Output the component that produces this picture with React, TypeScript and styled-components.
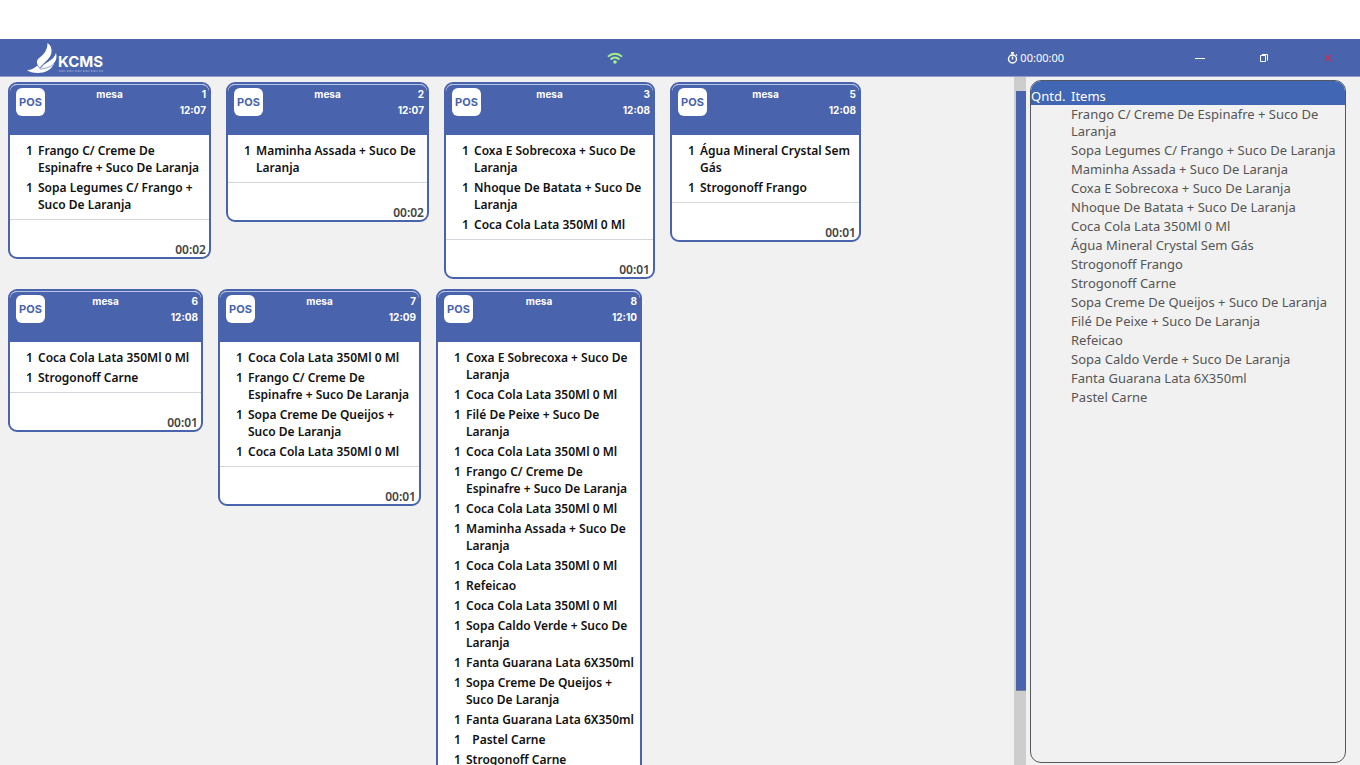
import React from "react";
import styled, { createGlobalStyle } from "styled-components";

const blue = "#4a63ad";

const GlobalStyle = createGlobalStyle`
  * { box-sizing: border-box; }
  html, body, #root { height: 100%; }
  body {
    margin: 0;
    overflow: hidden;
    background: #f1f1f1;
    font-family: "Noto Sans", "Open Sans", sans-serif;
    color: #111;
  }
`;

const Screen = styled.div`
  display: flex;
  flex-direction: column;
  height: 100vh;
  padding-top: 39px;
  background: #fff;
`;

const TitleBar = styled.header`
  display: grid;
  grid-template-columns: 1fr auto 1fr;
  align-items: center;
  flex: none;
  height: 38px;
  background: ${blue};
  border-bottom: 1px solid #8c9ccb;
  color: #fff;
`;

const Brand = styled.div`
  padding-left: 26px;
  svg { display: block; }
`;

const Signal = styled.div`
  padding-right: 130px;
  svg { display: block; }
`;

const BarEnd = styled.div`
  display: flex;
  align-items: center;
  justify-content: flex-end;
`;

const Clock = styled.div`
  display: flex;
  align-items: center;
  gap: 2px;
  margin-right: 104px;
  font: 11px/16px "Noto Sans", sans-serif;
`;

const WindowButton = styled.button`
  display: flex;
  align-items: center;
  justify-content: center;
  width: 64px;
  height: 36px;
  padding: 0;
  border: 0;
  background: none;
  color: ${(p) => p.color || "#fff"};
`;

const Main = styled.main`
  display: flex;
  flex: 1;
  min-height: 0;
  background: #f1f1f1;
`;

const Board = styled.section`
  display: flex;
  flex-wrap: wrap;
  align-items: flex-start;
  align-content: flex-start;
  gap: 10px 15px;
  flex: 1;
  min-width: 0;
  padding: 5px 8px 0;
  overflow: hidden;
`;

const Card = styled.article<{ $width: number }>`
  width: ${(p) => p.$width}px;
  border: 2px solid ${blue};
  border-radius: 9px;
  background: #fff;
  overflow: hidden;
`;

const CardHead = styled.header`
  display: grid;
  grid-template-columns: 1fr auto 1fr;
  align-items: start;
  height: 51px;
  padding: 1px 3px 0;
  border-top: 1px solid #b9c3e2;
  border-radius: 7px 7px 0 0;
  background: ${blue};
  color: #fff;
  font: 700 10px/16px Inter, sans-serif;
`;

const Badge = styled.span`
  display: grid;
  place-items: center;
  width: 29px;
  height: 28px;
  margin: 2px 0 0 3px;
  border-radius: 6px;
  background: #fff;
  color: ${blue};
  font: 700 11px/16px Inter, sans-serif;
`;

const Kind = styled.h2`
  margin: 0;
  font: inherit;
`;

const Stamp = styled.div`
  display: flex;
  flex-direction: column;
  text-align: right;
`;

const Lines = styled.ul`
  display: flex;
  flex-direction: column;
  gap: 3px;
  margin: 0;
  padding: 7px 0 6px 16px;
  border-bottom: 1px solid #d3d7dc;
  list-style: none;
  font-size: 12px;
  line-height: 17px;
  font-weight: 600;
`;

const Line = styled.li`
  display: grid;
  grid-template-columns: 12px 1fr;
  white-space: pre-wrap;
`;

const CardFoot = styled.footer`
  display: flex;
  align-items: flex-end;
  justify-content: flex-end;
  height: 37px;
  padding-right: 3px;
  color: #444;
  font-size: 12px;
  line-height: 14px;
  font-weight: 600;
`;

const Track = styled.div`
  flex: none;
  width: 12px;
  padding: 14px 0 0 2px;
  background: #cdcdcd;
`;

const Thumb = styled.div`
  height: 89%;
  border-bottom: 1px solid #7a7f9c;
  background: ${blue};
`;

const Summary = styled.aside`
  flex: none;
  width: 316px;
  margin: 3px 14px 2px 4px;
  border: 1px solid #55585e;
  border-radius: 11px;
  overflow: hidden;
`;

const Table = styled.table`
  width: 100%;
  border-collapse: collapse;
  table-layout: fixed;
  color: #555;
  font-size: 13px;
  line-height: 17px;

  th {
    height: 24px;
    padding: 6px 0 0;
    background: #4166b3;
    color: #fff;
    font-weight: 400;
    text-align: left;
  }
  th:first-child { width: 40px; }
  td { padding: 1px 0; }
  tbody td:last-child { padding-right: 4px; }
`;

type Order = { no: number; time: string; width: number; elapsed: string; items: string[] };

const coca = "Coca Cola Lata 350Ml 0 Ml";
const frango = "Frango C/ Creme De Espinafre + Suco De Laranja";
const coxa = "Coxa E Sobrecoxa + Suco De Laranja";
const maminha = "Maminha Assada + Suco De Laranja";
const queijos = "Sopa Creme De Queijos + Suco De Laranja";

const orders: Order[] = [
  { no: 1, time: "12:07", width: 203, elapsed: "00:02", items: [frango, "Sopa Legumes C/ Frango + Suco De Laranja"] },
  { no: 2, time: "12:07", width: 203, elapsed: "00:02", items: [maminha] },
  { no: 3, time: "12:08", width: 211, elapsed: "00:01", items: [coxa, "Nhoque De Batata + Suco De Laranja", coca] },
  { no: 5, time: "12:08", width: 191, elapsed: "00:01", items: ["Água Mineral Crystal Sem Gás", "Strogonoff Frango"] },
  { no: 6, time: "12:08", width: 195, elapsed: "00:01", items: [coca, "Strogonoff Carne"] },
  { no: 7, time: "12:09", width: 203, elapsed: "00:01", items: [coca, frango, queijos, coca] },
  {
    no: 8, time: "12:10", width: 206, elapsed: "00:01",
    items: [
      coxa, coca, "Filé De Peixe + Suco De Laranja", coca, frango, coca, maminha, coca, "Refeicao", coca,
      "Sopa Caldo Verde + Suco De Laranja", "Fanta Guarana Lata 6X350ml", queijos,
      "Fanta Guarana Lata 6X350ml", "  Pastel Carne", "Strogonoff Carne",
    ],
  },
];

const summary = [
  frango, "Sopa Legumes C/ Frango + Suco De Laranja", maminha, coxa, "Nhoque De Batata + Suco De Laranja", coca,
  "Água Mineral Crystal Sem Gás", "Strogonoff Frango", "Strogonoff Carne", queijos,
  "Filé De Peixe + Suco De Laranja", "Refeicao", "Sopa Caldo Verde + Suco De Laranja",
  "Fanta Guarana Lata 6X350ml", "Pastel Carne",
];

const Logo = () => (
  <svg width="82" height="32" viewBox="0 0 82 32" role="img" aria-label="KCMS">
    <path d="M21.500 1C25 3 26.500 8 25 12.500 23.500 17 18 21 14 26c-3.500-3-4-7-1.500-9.500C17 13 21.500 9 21.500 1z" fill="#fff" />
    <path d="M30 11c1.500 5-.5 9.500-4 12l-11 3.500c2-6 12.500-7 15-15.500z" fill="#fff" />
    <path d="M1 28c4.500 0 7.500-2 10.500-4.500L15 26l13-4c-3 6-9 9-16 9-5 0-9-1-11-3z" fill="#fff" />
    <path d="M13.500 26.500C17 21 24 18 26 12M14 27c4 0 9-1.500 13-4M11.500 23.500l2.500 3" fill="none" stroke={blue} strokeWidth="0.6" />
    <text x="32" y="25" fill="#fff" fontFamily="Inter, sans-serif" fontWeight="700" fontSize="15">KCMS</text>
    <path d="M33 29h44" stroke="#b4bfe0" strokeWidth="1" strokeDasharray="1.5 1 2 1 1 1.500" />
  </svg>
);

const Wifi = () => (
  <svg width="16" height="12" viewBox="0 0 16 12" fill="none" stroke="#a6f08c" strokeWidth="2">
    <path d="M1 4.600C5 .8 11 .8 15 4.600M3.600 7.400c2.600-2.400 6.200-2.400 8.800 0" />
    <circle cx="8" cy="10" r="1.800" fill="#a6f08c" stroke="none" />
  </svg>
);

const Stopwatch = () => (
  <svg width="11" height="12" viewBox="0 0 11 12" fill="none" stroke="#fff" strokeWidth="1.4">
    <circle cx="5.500" cy="7" r="4" />
    <path d="M4 .8h3M5.500 1v2M5.500 4.600V7.400M9 2.600l1 1" />
  </svg>
);

export default function App() {
  return (
    <Screen>
      <GlobalStyle />
      <TitleBar>
        <Brand><Logo /></Brand>
        <Signal><Wifi /></Signal>
        <BarEnd>
          <Clock><Stopwatch />00:00:00</Clock>
          <WindowButton aria-label="Minimizar">
            <svg width="10" height="10" fill="none" stroke="currentColor"><path d="M0 5.500h10" /></svg>
          </WindowButton>
          <WindowButton aria-label="Restaurar">
            <svg width="10" height="10" fill="none" stroke="currentColor">
              <path d="M1.500 2.500h5v6h-5zM3 1.500h5.500v6" />
            </svg>
          </WindowButton>
          <WindowButton aria-label="Fechar" color="#c9304f">
            <svg width="8" height="8" fill="none" stroke="currentColor" strokeWidth="1.4"><path d="M1 1l6 6M7 1l-6 6" /></svg>
          </WindowButton>
        </BarEnd>
      </TitleBar>
      <Main>
        <Board>
          {orders.map((o) => (
            <Card key={o.no} $width={o.width}>
              <CardHead>
                <Badge>POS</Badge>
                <Kind>mesa</Kind>
                <Stamp><span>{o.no}</span><time>{o.time}</time></Stamp>
              </CardHead>
              <Lines>
                {o.items.map((item, i) => (
                  <Line key={i}><span>1</span><span>{item}</span></Line>
                ))}
              </Lines>
              <CardFoot>{o.elapsed}</CardFoot>
            </Card>
          ))}
        </Board>
        <Track><Thumb /></Track>
        <Summary>
          <Table>
            <thead><tr><th scope="col">Qntd.</th><th scope="col">Items</th></tr></thead>
            <tbody>{summary.map((s) => <tr key={s}><td /><td>{s}</td></tr>)}</tbody>
          </Table>
        </Summary>
      </Main>
    </Screen>
  );
}
